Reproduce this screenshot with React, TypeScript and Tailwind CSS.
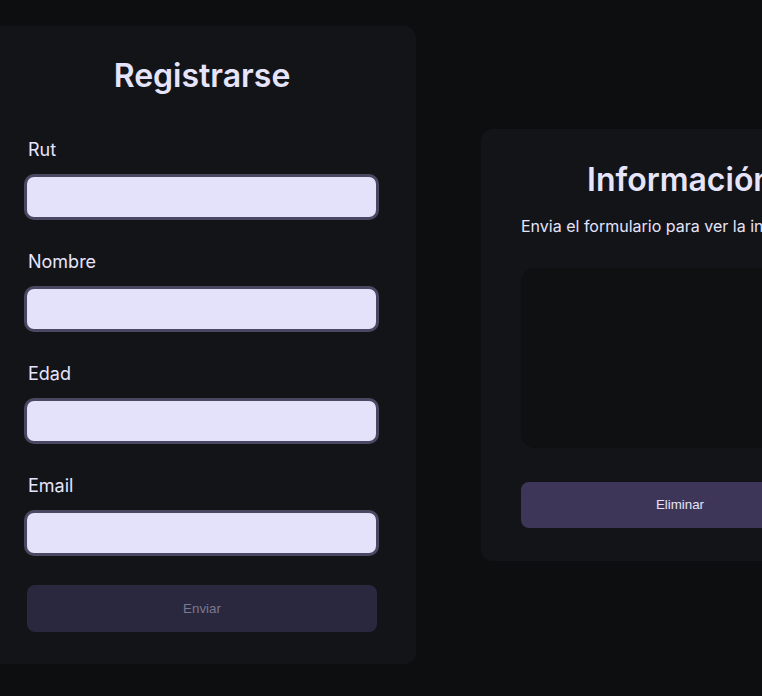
export default function App() {
  const fields = ["Rut", "Nombre", "Edad", "Email"];
  return (
    <div
      className="min-h-screen w-full overflow-hidden bg-[#0d0e10] text-[#e6e4fb]"
      style={{ fontFamily: "Inter, 'Noto Sans', sans-serif" }}
    >
      <div className="ml-[-12px] flex items-center gap-[65px] pt-[26px]">
        <div className="flex w-[428px] shrink-0 flex-col rounded-[12px] bg-[#131418] px-[38px] pb-[32px] pt-[30px]">
          <h2 className="text-center text-[32px] font-semibold leading-[40px]">Registrarse</h2>
          <form className="mt-[40px] flex flex-col gap-[28px]" onSubmit={(e) => e.preventDefault()}>
            {fields.map((f) => (
              <div key={f} className="flex flex-col gap-[10px]">
                <label className="pl-[2px] text-[18px] leading-[28px]">{f}</label>
                <input className="ml-[-2px] h-[46px] w-[355px] rounded-[10px] border-[3px] border-[#4b4762] bg-[#e4e2fb] px-3 text-black outline-none" />
              </div>
            ))}
            <button
              type="submit"
              className="mx-[1px] mt-[1px] h-[47px] rounded-[8px] bg-[#2a283e] text-[13.33px] text-[#7b7891]"
              style={{ fontFamily: "'Liberation Sans', Arial, sans-serif" }}
            >
              Enviar
            </button>
          </form>
        </div>
        <div className="flex w-[398px] shrink-0 flex-col rounded-[12px] bg-[#131418] px-[40px] pb-[33px] pt-[31px]">
          <h2 className="whitespace-nowrap text-center text-[32px] font-semibold leading-[40px]">Información</h2>
          <p className="mt-[14px] whitespace-nowrap text-[16px] leading-[24px]">
            Envia el formulario para ver la información
          </p>
          <div className="mt-[30px] h-[180px] rounded-[14px] bg-[#0f1012]" />
          <button
            className="mt-[34px] h-[46px] rounded-[8px] bg-[#3d3659] text-[13.33px] text-[#e6e4fb]"
            style={{ fontFamily: "'Liberation Sans', Arial, sans-serif" }}
          >
            Eliminar
          </button>
        </div>
      </div>
    </div>
  );
}
